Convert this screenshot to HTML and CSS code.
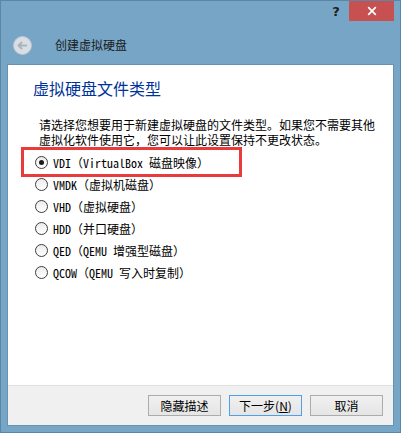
FILE: index.html
```html
<!DOCTYPE html>
<html lang="zh-CN">
  <head>
    <meta charset="UTF-8" />
    <title>创建虚拟硬盘</title>
    <link rel="stylesheet" href="styles.css">
  </head>
  <body>
    <div class="window">
      <div class="titlebar">
        <span class="help">?</span>
        <span class="close">
          <svg width="10" height="10" viewBox="0 0 10 10">
            <path d="M1.2 1.2 L8.8 8.8 M8.8 1.2 L1.2 8.8" stroke="#fff" stroke-width="1.7" fill="none" />
          </svg>
        </span>
      </div>

      <div class="header">
        <svg class="back" width="19" height="19" viewBox="0 0 19 19">
          <circle cx="9.5" cy="9.5" r="9" fill="#d8dee4" stroke="#bcc5ce" />
          <path d="M14 9.5 H5.5 M9 6 L5.5 9.5 L9 13" stroke="#a9b3bd" stroke-width="1.8" fill="none" />
        </svg>
        <span class="title">创建虚拟硬盘</span>
      </div>

      <div class="panel">
        <div class="page">
          <h1>虚拟硬盘文件类型</h1>
          <p class="desc">请选择您想要用于新建虚拟硬盘的文件类型。如果您不需要其他虚拟化软件使用它，您可以让此设置保持不更改状态。</p>
          <ul class="options">
            <li class="option checked"><span class="radio"></span>VDI（VirtualBox 磁盘映像）</li>
            <li class="option"><span class="radio"></span>VMDK（虚拟机磁盘）</li>
            <li class="option"><span class="radio"></span>VHD（虚拟硬盘）</li>
            <li class="option"><span class="radio"></span>HDD（并口硬盘）</li>
            <li class="option"><span class="radio"></span>QED（QEMU 增强型磁盘）</li>
            <li class="option"><span class="radio"></span>QCOW（QEMU 写入时复制）</li>
          </ul>
          <div class="highlight"></div>
        </div>

        <div class="footer">
          <button>隐藏描述</button>
          <button class="default">下一步(<u>N</u>)</button>
          <button>取消</button>
        </div>
      </div>
    </div>
  </body>
</html>
```

FILE: styles.css
```css
body {
  margin: 0;
  font-family: "Noto Sans CJK SC", sans-serif;
  font-size: 12px;
  color: #000;
}
.window {
  width: 401px;
  height: 433px;
  box-sizing: border-box;
  border: 1px solid #5b87a7;
  background: #77a5c6;
  display: flex;
  flex-direction: column;
}
.titlebar {
  height: 20px;
  display: flex;
  justify-content: flex-end;
  padding-right: 6px;
}
.help {
  width: 26px;
  line-height: 21px;
  text-align: center;
  font-family: "DejaVu Sans", sans-serif;
  font-weight: bold;
  font-size: 13px;
  color: #1e1e1e;
}
.close {
  width: 45px;
  height: 20px;
  background: #c75050;
  display: flex;
  align-items: center;
  justify-content: center;
}
.header {
  height: 38px;
  padding: 5px 0 0 12px;
  display: flex;
  align-items: center;
  gap: 23px;
}
.title {
  color: #1a1a1a;
  line-height: 16px;
}
.panel {
  flex: 1;
  margin: 0 6px 6px;
  border: 1px solid #6892b2;
  background: #fff;
  display: flex;
  flex-direction: column;
}
.page {
  flex: 1;
  position: relative;
  padding-top: 13px;
}
h1 {
  margin: 0 0 0 25px;
  font-size: 16px;
  font-weight: normal;
  line-height: 20px;
  color: #003399;
}
.desc {
  margin: 19px 14px 0 31px;
  line-height: 15px;
}
.options {
  list-style: none;
  margin: 4px 0 0 27px;
  padding: 0;
}
.option {
  height: 22px;
  display: flex;
  align-items: center;
  gap: 5px;
  font-family: "Noto Sans Mono CJK SC", "Noto Sans CJK SC", monospace;
}
.radio {
  flex: none;
  width: 13px;
  height: 13px;
  box-sizing: border-box;
  border: 1px solid #3c3c3c;
  border-radius: 50%;
  background: linear-gradient(#ececec, #fff);
  display: flex;
  align-items: center;
  justify-content: center;
}
.checked .radio::after {
  content: "";
  width: 5px;
  height: 5px;
  border-radius: 50%;
  background: #1b1b1b;
}
.highlight {
  position: absolute;
  left: 13px;
  top: 82px;
  width: 221px;
  height: 30px;
  box-sizing: border-box;
  border: 3px solid #e93b3b;
}
.footer {
  height: 40px;
  box-sizing: border-box;
  border-top: 1px solid #dfdfdf;
  background: #f0f0f0;
  padding: 9px 10px 0 0;
  display: flex;
  justify-content: flex-end;
  align-items: flex-start;
  gap: 8px;
}
.footer button {
  width: 73px;
  height: 21px;
  padding: 0;
  border: 1px solid #acacac;
  background: linear-gradient(#f0f0f0, #e5e5e5);
  font-family: "Noto Sans CJK SC", sans-serif;
  font-size: 12px;
  color: #000;
}
.footer .default {
  border-color: #4f9fea;
}
```
